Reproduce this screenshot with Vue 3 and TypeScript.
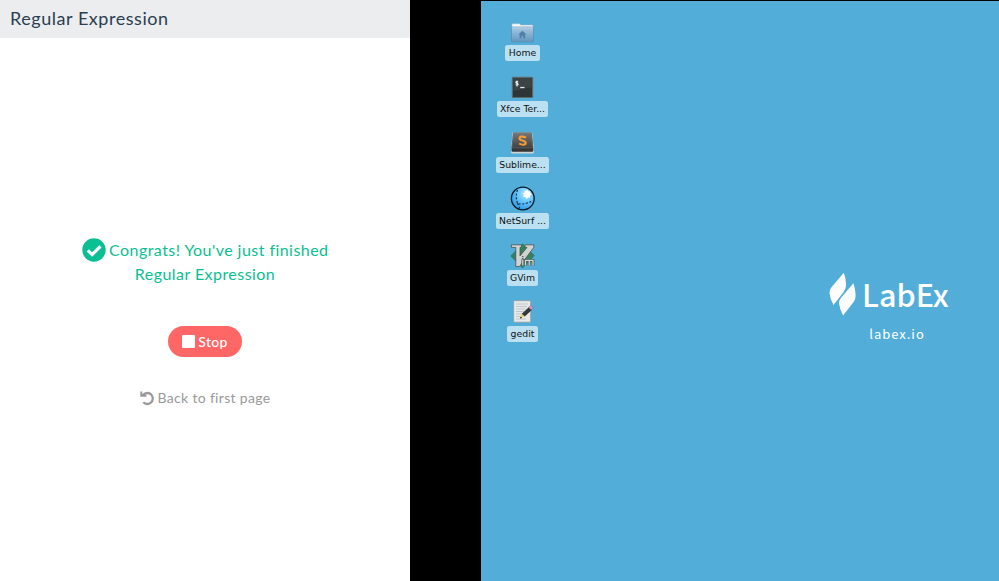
<script setup lang="ts">
interface Shortcut {
  id: string
  label: string
}

const course: string = 'Regular Expression'

const shortcuts: Shortcut[] = [
  { id: 'home', label: 'Home' },
  { id: 'terminal', label: 'Xfce Ter...' },
  { id: 'sublime', label: 'Sublime...' },
  { id: 'netsurf', label: 'NetSurf ...' },
  { id: 'gvim', label: 'GVim' },
  { id: 'gedit', label: 'gedit' },
]
</script>

<template>
  <div class="lab">
    <section class="guide">
      <header class="guide-header">{{ course }}</header>
      <div class="guide-body">
        <p class="congrats">
          <svg class="check" viewBox="0 0 24 24"><circle cx="12" cy="12" r="11.7" fill="#0abf91" /><path d="M5.8 12.4l4.3 4.2 8.3-8.3" fill="none" stroke="#fff" stroke-width="3.2" /></svg>
          Congrats! You've just finished<br />{{ course }}
        </p>
        <button class="stop" type="button">
          <svg class="stop-icon" viewBox="0 0 13 13"><rect width="13" height="13" rx="1" fill="#fff" /></svg>
          <span>Stop</span>
        </button>
        <a class="back">
          <svg class="back-icon" viewBox="0 0 15 15"><path d="M2.8 4.300A5.500 5.500 0 1 1 3.300 11.300" fill="none" stroke="#999" stroke-width="2.3" /><path d="M0.300 0.600h2v3h4.200v2.200H0.300z" fill="#999" /></svg>
          <span>Back to first page</span>
        </a>
      </div>
    </section>

    <main class="desktop">
      <ul class="shortcuts">
        <li v-for="item in shortcuts" :key="item.id" class="shortcut">
          <svg class="app-icon" viewBox="-1 -2 26 26">
            <defs>
              <linearGradient id="folder" x2="0" y2="1"><stop stop-color="#a9c9e2" /><stop offset="1" stop-color="#6496bd" /></linearGradient>
              <linearGradient id="key" x2="0" y2="1"><stop stop-color="#777" /><stop offset="1" stop-color="#414141" /></linearGradient>
              <radialGradient id="globe" cx=".65" cy=".28" r=".75"><stop stop-color="#bcebff" /><stop offset=".35" stop-color="#7bd0ff" /><stop offset="1" stop-color="#2a9cec" /></radialGradient>
            </defs>
            <g v-if="item.id === 'home'">
              <path d="M1 9V4.500Q1 3.700 1.800 3.700H8.600L9.600 5H21.300Q22 5 22 6V10H1z" fill="#f5f7f8" stroke="#9db4c4" stroke-width=".5" />
              <rect x=".4" y="7" width="22.100" height="14.800" rx=".8" fill="url(#folder)" stroke="#5989ae" stroke-width=".7" />
              <path d="M1 7.800h21" stroke="#c5dced" stroke-width=".7" />
              <path d="M11.400 10.800l4 3.600h-1.200v3.800h-2v-2.400h-1.600v2.400h-2v-3.800H7.400z" fill="#4d81a9" />
            </g>
            <g v-else-if="item.id === 'terminal'">
              <rect x="1.400" y="1.300" width="20.200" height="20.200" rx=".8" fill="#2d3537" stroke="#5e6768" stroke-width="1.200" />
              <path d="M2.300 2.200h18.400v9L2.300 15z" fill="#3b4345" />
              <path d="M7.300 6c-2.700-1-3.300.8-1.500 1.300 2.200.6 1.600 2.500-1.200 1.500M6 4.600v5.800" fill="none" stroke="#eee" stroke-width="1.100" />
              <path d="M9.200 11.500h4.300" stroke="#e5e5e5" stroke-width="1.300" />
            </g>
            <g v-else-if="item.id === 'sublime'">
              <path d="M1.600.5h19.600l1.600 16v3.700q0 1.300-1.300 1.300H1.400Q.1 21.500.1 20.200V16.500z" fill="#d0d3d4" />
              <path d="M2.200.8h18.500l1.500 15v2.700q0 1.200-1.200 1.200H1.700Q.5 19.700.5 18.500v-2.700z" fill="#353535" />
              <path d="M2.500.8h18l1.200 14q0 1.200-1.200 1.200H2.400q-1.200 0-1.200-1.200z" fill="url(#key)" stroke="#8a8a8a" stroke-width=".4" />
              <path d="M15 5.700c-3.300-1.800-6.500-1.300-6.500.7 0 2.500 6.200 1.800 6.200 4.500 0 2.300-3.800 2.400-6.500.6" fill="none" stroke="#f49a36" stroke-width="2.100" />
            </g>
            <g v-else-if="item.id === 'netsurf'">
              <circle cx="11.800" cy="10.500" r="11.400" fill="url(#globe)" stroke="#071722" stroke-width="1.300" />
              <path d="M6.500 2c-2 5-1.300 9.500 0 13.300 3.500 1.500 8.500 1 15.500-2.800M6.500 15.300l2.300 5" fill="none" stroke="#08283c" stroke-width="1.100" stroke-dasharray="2 1.700" />
              <path d="M16.300 1.600l1.100 1.900 2.200-.3-.5 2.100 1.800 1.200-2 1.200.2 2.100-2.100-.4-1.500 1.600-1-2-2.200-.1.800-2-1.400-1.700 2-.8.200-2.200 1.700.9z" fill="#fff" />
            </g>
            <g v-else-if="item.id === 'gvim'">
              <path d="M11.500-1.300L23.300 10.600 11.500 23-.2 11z" fill="#338261" stroke="#275d4a" stroke-width=".5" />
              <path d="M.4-.2h10v2.600H9v8.500L16 2.400h-2V-.2h8.800v2.600L8.500 21.500H4.800V2.400H.4z" fill="#d1d2d2" stroke="#47534f" stroke-width=".8" />
              <g fill="none" stroke-linejoin="round">
                <path d="M11 12.500h1.600M10.600 15h1.200v5.200M14.300 20.500V15.300h3.800v5.200M18.100 15.300h3.900v5.200" stroke="#3e5750" stroke-width="2.800" />
                <path d="M11.200 12.500h1.600M11.800 14.500v6M14.500 20.500V15.300h3.700v5.200M18.200 15.300H22v5.200" stroke="#d7dad8" stroke-width="1.300" />
              </g>
            </g>
            <g v-else>
              <rect x="2.700" y="-.3" width="17" height="21.500" rx=".7" fill="#e8eaea" stroke="#949a9c" stroke-width=".8" />
              <path d="M5 3h12M5 5.500h11M5 8h10M5 10.500h8M5 13h6M5 15.500h4M5 18h10" stroke="#b9bdbe" stroke-width=".8" />
              <path d="M9.300 17l1.300-4.500 3.200 3z" fill="#e6d26a" />
              <path d="M10.800 12.700l7.300-6.700 2.900 2.800-7.200 6.700z" fill="#34383a" />
              <path d="M17.600 6.400l1.600-1.500q1-.6 2 .4t.5 2l-1.500 1.500z" fill="#d39abf" stroke="#81637a" stroke-width=".5" />
              <path d="M9 17.500l.6-2 1.500 1.400z" fill="#222" />
            </g>
          </svg>
          <span class="label">{{ item.label }}</span>
        </li>
      </ul>

      <div class="brand">
        <div class="brand-row">
          <svg class="brand-mark" viewBox="0 0 27 44">
            <path id="leaf" d="M14.800.7L2.300 15.500Q.3 18 .5 21Q.9 26.500 4.500 33L15 19.500Q17.300 16.500 17 12Q16.700 5.500 14.800.7z" fill="#fff" />
            <use href="#leaf" x="9.600" y="10.500" />
          </svg>
          <span class="brand-name">LabEx</span>
        </div>
        <span class="brand-site">labex.io</span>
      </div>
    </main>
  </div>
</template>

<style>
body {
  margin: 0;
  overflow: hidden;
}
</style>

<style scoped>
.lab {
  display: flex;
  width: 999px;
  height: 581px;
  background: #000;
  font-family: Lato, "Liberation Sans", sans-serif;
}
.guide {
  display: flex;
  flex-direction: column;
  width: 410px;
  margin-right: 71px;
  background: #fff;
}
.guide-header {
  box-sizing: border-box;
  height: 38px;
  padding-left: 10px;
  background: #ebedef;
  color: #2c3e50;
  font-size: 18px;
  line-height: 37px;
  letter-spacing: 0.54px;
}
.guide-body {
  display: flex;
  flex-direction: column;
  align-items: center;
  padding-top: 200px;
}
.congrats {
  margin: 0;
  color: #0abf91;
  font-size: 16px;
  line-height: 24px;
  letter-spacing: 0.45px;
  text-align: center;
}
.check {
  width: 24px;
  height: 24px;
  margin-right: -1px;
  vertical-align: top;
}
.stop {
  display: flex;
  align-items: center;
  justify-content: center;
  gap: 3px;
  width: 74px;
  height: 31px;
  margin: 40px 0 0;
  padding: 0;
  border: 0;
  border-radius: 16px;
  background: #ff6666;
  color: #fff;
  font: 500 14px/20px Lato, sans-serif;
  letter-spacing: 0.3px;
}
.stop-icon {
  width: 13px;
  height: 13px;
}
.back {
  display: flex;
  align-items: center;
  gap: 3px;
  margin-top: 31px;
  color: #999;
  font-size: 14px;
  line-height: 20px;
  letter-spacing: 0.32px;
}
.back-icon {
  width: 15px;
  height: 15px;
}
.desktop {
  display: flex;
  justify-content: space-between;
  box-sizing: border-box;
  width: 518px;
  height: 580px;
  margin-top: 1px;
  padding: 17px 50px 0 9px;
  background: #52aed9;
}
.shortcuts {
  display: grid;
  grid-auto-rows: 56.15px;
  align-content: start;
  width: 65px;
  margin: 0;
  padding: 0;
  list-style: none;
}
.shortcut {
  display: flex;
  flex-direction: column;
  align-items: center;
  gap: 1px;
}
.app-icon {
  width: 26px;
  height: 26px;
}
.label {
  height: 16px;
  padding: 0 3.3px;
  border-radius: 2.5px;
  background: #bae0f1;
  color: #111;
  font: 9.3px/16px "DejaVu Sans", sans-serif;
  white-space: nowrap;
}
.brand {
  display: flex;
  flex-direction: column;
  align-items: center;
  width: 120px;
  padding-top: 254px;
  color: #fff;
  font-family: "Noto Sans CJK SC", sans-serif;
}
.brand-row {
  display: flex;
  align-items: center;
  gap: 6px;
  width: 120px;
  height: 44px;
}
.brand-mark {
  flex: none;
  width: 27px;
  height: 44px;
}
.brand-name {
  font-size: 30.5px;
  font-weight: 500;
  line-height: 44px;
}
.brand-site {
  margin-top: 8px;
  padding-left: 16px;
  font-size: 13px;
  line-height: 20px;
  letter-spacing: 1px;
}
</style>
